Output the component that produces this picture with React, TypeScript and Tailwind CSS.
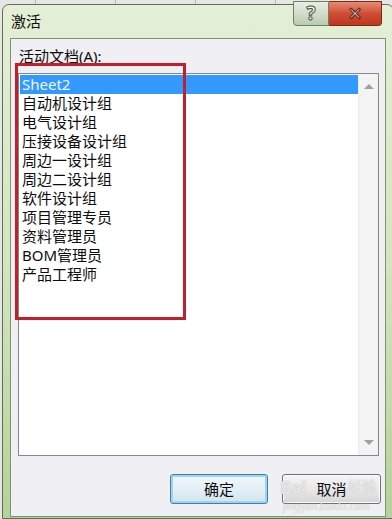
const items = [
  'Sheet2',
  '自动机设计组',
  '电气设计组',
  '压接设备设计组',
  '周边一设计组',
  '周边二设计组',
  '软件设计组',
  '项目管理专员',
  '资料管理员',
  'BOM管理员',
  '产品工程师',
];

const font = 'font-["Noto_Sans","Noto_Sans_CJK_SC",sans-serif]';

export default function App() {
  return (
    <div className={`relative w-[392px] h-[519px] overflow-hidden bg-[#e6e6e6] ${font}`}>
      {/* sheet behind the dialog */}
      <div className="flex h-[6px] pl-[35px] gap-[79px]">
        {[0, 1, 2, 3, 4].map((i) => (
          <div key={i} className="w-px h-full bg-[#b8b8b8]" />
        ))}
      </div>

      {/* dialog window */}
      <div className="absolute left-[2px] top-[4px] w-[392px] h-[515px] rounded-t-[7px] border border-[#5f7052] bg-gradient-to-b from-[#e4efd6] via-[#d3e6bf] to-[#b4d299] flex flex-col">
        <div className="h-[33px] flex items-center pl-[8px] text-[15px] text-[#0d0d0d]">
          激活
        </div>

        <div className="ml-[7px] mr-[7px] mb-[1px] flex-1 border border-[#7f9272] bg-[#f0eff3] flex flex-col">
          <div className="pl-[8px] pt-[7px] h-[34px] text-[15px] leading-[20px] text-[#0d0d0d]">
            活动文档(<span className="underline underline-offset-2">A</span>):
          </div>

          {/* list box */}
          <div className="ml-[7px] w-[361px] h-[383px] border border-[#828790] bg-white flex">
            <div className="flex-1 pt-[1px] pl-[1px]">
              {items.map((name, i) => (
                <div
                  key={name}
                  className={
                    i === 0
                      ? 'h-[19px] pl-[2px] text-[15px] leading-[19px] bg-[#3399ff] text-[#eef6ff]'
                      : 'h-[19px] pl-[2px] text-[15px] leading-[19px] text-[#0d0d0d]'
                  }
                >
                  {name}
                </div>
              ))}
            </div>
            <div className="w-[20px] bg-[#f3f3f4] border-l border-[#ececec] flex flex-col items-center justify-between py-[10px]">
              <div className="w-0 h-0 border-l-[5px] border-r-[5px] border-b-[5px] border-l-transparent border-r-transparent border-b-[#a0a0a0]" />
              <div className="w-0 h-0 border-l-[5px] border-r-[5px] border-t-[5px] border-l-transparent border-r-transparent border-t-[#a0a0a0]" />
            </div>
          </div>

          {/* buttons */}
          <div className="flex justify-end gap-[14px] pr-[4px] mt-[18px]">
            <button className="w-[98px] h-[30px] rounded-[3px] border border-[#3c7fb1] bg-gradient-to-b from-[#f2f8fc] via-[#e4eff6] to-[#d2e3ee] shadow-[inset_0_0_0_2px_#9fd4ee] text-[15px] text-[#0d0d0d]">
              确定
            </button>
            <button className="w-[99px] h-[30px] rounded-[3px] border border-[#707070] bg-gradient-to-b from-[#f4f4f4] via-[#e9e9e9] to-[#d6d6d6] shadow-[inset_0_0_0_1px_#fbfbfb] text-[15px] text-[#0d0d0d]">
              取消
            </button>
          </div>
        </div>
      </div>

      {/* caption buttons */}
      <div className="absolute left-[293px] top-[1px] flex">
        <div className="w-[36px] h-[25px] rounded-bl-[4px] border border-[#6f7f66] bg-gradient-to-b from-[#e8eee2] to-[#bccab2] flex items-center justify-center">
          <span className="text-[19px] leading-none font-bold text-white [-webkit-text-stroke:1px_#44503c]">?</span>
        </div>
        <div className="w-[53px] h-[25px] rounded-br-[4px] border border-l-0 border-[#7a2a1c] bg-gradient-to-b from-[#e68b73] via-[#cf4d33] to-[#c0351c] flex items-center justify-center">
          <span className="text-[18px] leading-none font-bold text-white [-webkit-text-stroke:1px_#5a1a10] font-['DejaVu_Sans',sans-serif]">✕</span>
        </div>
      </div>

      {/* red highlight box */}
      <div className="absolute left-[15px] top-[63px] w-[171px] h-[257px] border-[3px] border-[#c0202c]" />

      {/* watermark */}
      <div className="absolute left-[280px] top-[476px] pointer-events-none text-white/70 [text-shadow:0_0_1px_#a8a8a8]">
        <span className="text-[17px] leading-[20px] font-bold">Bai</span>
      </div>
      <div className="absolute left-[348px] top-[478px] pointer-events-none text-[14px] leading-[16px] text-white/70 [text-shadow:0_0_1px_#a8a8a8]">
        经验
      </div>
      <div className="absolute left-[283px] top-[501px] pointer-events-none text-[10px] leading-[11px] text-white/70 [text-shadow:0_0_1px_#a8a8a8]">
        jingyan.baidu.com
      </div>
    </div>
  );
}
